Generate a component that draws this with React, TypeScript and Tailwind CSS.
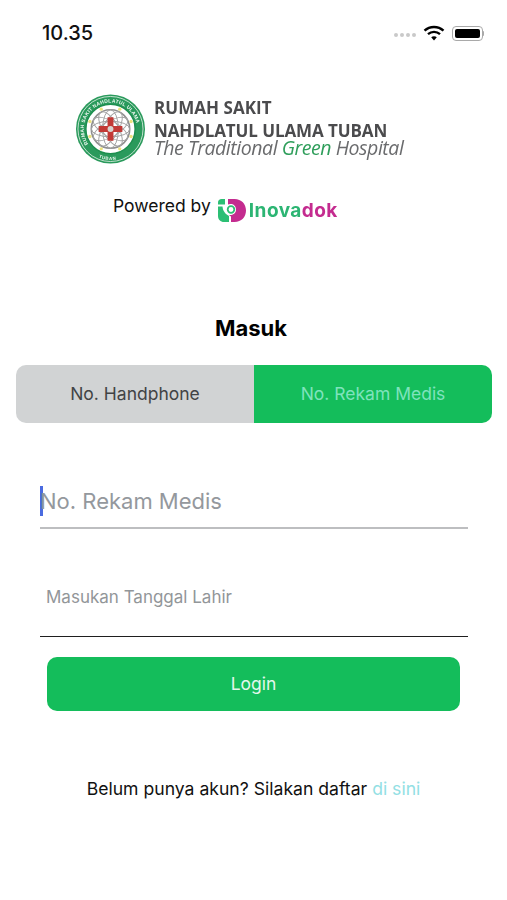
import React from "react";

const sans = "font-['Inter','Noto_Sans',sans-serif]";

function Wifi() {
  return (
    <svg width="22" height="16" viewBox="0 0 22 16" fill="none">
      <path d="M1.500 5.600C6.800.7 15.200.7 20.500 5.600" stroke="#000" strokeWidth="2.400" />
      <path d="M5 9.100c3.400-3 8.600-3 12 0" stroke="#000" strokeWidth="2.400" />
      <path d="M8.200 12.200c1.600-1.300 4-1.300 5.600 0L11 15.400z" fill="#000" />
    </svg>
  );
}

function Battery() {
  return (
    <div className="flex items-center">
      <div className="w-[31px] h-[15px] rounded-[4px] border border-[#a9a9a9] p-[2px]">
        <div className="w-full h-full rounded-[2px] bg-black" />
      </div>
      <div className="w-[1.5px] h-[5px] bg-[#a9a9a9] rounded-r-sm" />
    </div>
  );
}

function StatusBar() {
  return (
    <div className="flex items-center justify-between h-[24px] mt-[21px] pl-[42px] pr-[23px]">
      <span className={`${sans} text-[20px] font-medium text-[#111]`}>10.35</span>
      <div className="flex items-center">
        <div className="flex gap-[2px] mr-[7px] mt-[4px]">
          <div className="w-[4px] h-[4px] rounded-full bg-[#c9c9c9]" />
          <div className="w-[4px] h-[4px] rounded-full bg-[#c9c9c9]" />
          <div className="w-[4px] h-[4px] rounded-full bg-[#c9c9c9]" />
          <div className="w-[4px] h-[4px] rounded-full bg-[#c9c9c9]" />
        </div>
        <div className="mr-[7px]">
          <Wifi />
        </div>
        <Battery />
      </div>
    </div>
  );
}

function HospitalSeal() {
  const web = [0, 30, 60, 90, 120, 150];
  const dots = [20, 65, 115, 160, 200, 245, 295, 340];
  return (
    <svg width="71" height="72" viewBox="0 0 72 72" className="blur-[0.6px]">
      <circle cx="36" cy="36" r="35" fill="#2a9a5c" />
      <circle cx="36" cy="36" r="33" fill="none" stroke="#e9f4ec" strokeWidth="0.800" />
      <circle cx="36" cy="36" r="25" fill="#fff" stroke="#1d8f4f" strokeWidth="1.500" />
      <circle cx="36" cy="36" r="19.500" fill="none" stroke="#8f8f8f" strokeWidth="1.600" />
      {web.map((a) => (
        <ellipse
          key={a}
          cx="36"
          cy="36"
          rx="19.500"
          ry="8"
          fill="none"
          stroke="#a3a3a3"
          strokeWidth="1"
          transform={`rotate(${a} 36 36)`}
        />
      ))}
      {dots.map((a) => (
        <circle
          key={a}
          cx={36 + 22.2 * Math.cos((a * Math.PI) / 180)}
          cy={36 + 22.2 * Math.sin((a * Math.PI) / 180)}
          r="1.700"
          fill="#ece27c"
        />
      ))}
      <path d="M33 24h6v9h9v6h-9v9h-6v-9h-9v-6h9z" fill="#c23a36" />
      <circle cx="36" cy="36" r="3" fill="#d9d2cd" />
      <defs>
        <path id="seal-top" d="M13.500 51A27 27 0 1 1 58.500 51" />
        <path id="seal-bottom" d="M24 65A31.500 31.500 0 0 0 48 65" />
      </defs>
      <text fontSize="5" fontWeight="700" fill="#eef8f1" fontFamily="Liberation Sans, sans-serif" letterSpacing="0.300">
        <textPath href="#seal-top">RUMAH SAKIT NAHDLATUL ULAMA</textPath>
      </text>
      <text fontSize="4.500" fontWeight="700" fill="#eef8f1" fontFamily="Liberation Sans, sans-serif" letterSpacing="0.500">
        <textPath href="#seal-bottom">TUBAN</textPath>
      </text>
    </svg>
  );
}

function InovadokMark() {
  return (
    <svg width="30" height="25" viewBox="0 0 30 25" className="blur-[0.3px]">
      <path d="M1 4.500C1 2.500 2.500 1 4.500 1H8v5.500H1z" fill="#2cbf74" />
      <path d="M1 8.500h4.500c.4 5 3.500 8 6.500 9.500v6H7c-3.500 0-6-2.500-6-6z" fill="#2cbf74" />
      <path d="M11 1h6.500C24.500 1 29 6 29 12.500S24.500 24 17.500 24H14v-5.500c-1-.5-1.500-1-2-1.500 3 .5 7-1 7-5.500 0-3.500-2.500-5.500-5.500-5.500-1 0-2 .2-2.500.6z" fill="#c42b8f" />
      <circle cx="14" cy="11.500" r="3.300" fill="none" stroke="#2cbf74" strokeWidth="1.800" />
    </svg>
  );
}

function LogoBlock() {
  return (
    <div className="flex flex-col">
      <div className="flex items-center pl-[75px] mt-[48px]">
        <HospitalSeal />
        <div className="ml-[8px] mb-[7px] flex flex-col font-['Open_Sans',sans-serif] blur-[0.3px]">
          <span className="text-[17px] leading-[22px] font-bold text-[#4b4b4d] tracking-[0.05px]">RUMAH SAKIT</span>
          <span className="text-[17px] leading-[22px] mt-[1px] font-bold text-[#4b4b4d] tracking-[-0.1px]">
            NAHDLATUL ULAMA TUBAN
          </span>
          <span className="text-[19.5px] leading-[12px] italic text-[#6a6b6d] tracking-[-0.45px]">
            The Traditional <span className="text-[#2f9e5b]">Green</span> Hospital
          </span>
        </div>
      </div>
      <div className="flex items-center pl-[113px] mt-[32px]">
        <span className={`${sans} text-[17.5px] leading-[24px] text-[#111] -mt-[10px]`}>Powered by</span>
        <div className="ml-[6px]">
          <InovadokMark />
        </div>
        <span className={`${sans} ml-[2px] text-[19px] leading-[27px] font-bold tracking-[0.45px] text-[#2cb573] blur-[0.2px]`}>
          Inova<span className="text-[#c42b8f]">dok</span>
        </span>
      </div>
    </div>
  );
}

export default function App() {
  return (
    <div className={`${sans} w-[507px] h-[900px] bg-white overflow-hidden flex flex-col`}>
      <StatusBar />
      <LogoBlock />

      <h1 className="mt-[90px] pr-[5px] text-center text-[22px] leading-[28px] font-bold text-black">Masuk</h1>

      <div className="flex mt-[23px] ml-[16px] mr-[15px] h-[58px] rounded-[10px] overflow-hidden text-[17.5px]">
        <div className="w-[238px] flex items-center justify-center bg-[#d1d3d4] text-[#414345]">No. Handphone</div>
        <div className="flex-1 flex items-center justify-center bg-[#14bd5b] text-[#7fe3bd]">No. Rekam Medis</div>
      </div>

      <div className="mt-[64px] ml-[40px] w-[428px] h-[42px] border-b-2 border-[#bdbec0] flex items-start">
        <div className="w-[3px] h-[30px] bg-[#4a6be0] -mt-[1px]" />
        <span className="-mt-[1px] -ml-[3px] text-[22px] leading-[30px] text-[#94989d]">No. Rekam Medis</span>
      </div>

      <div className="mt-[54px] ml-[40px] w-[428px] h-[54px] border-b-[1.5px] border-[#1f1f1f]">
        <span className="block pl-[6px] pt-[2px] text-[17px] leading-[24px] text-[#929699]">Masukan Tanggal Lahir</span>
      </div>

      <button className="mt-[20px] ml-[47px] w-[413px] h-[54px] pt-[1px] rounded-[10px] bg-[#14bd5b] text-[17.5px] text-[#e3f7ec]">
        Login
      </button>

      <p className="mt-[66px] text-center text-[17.6px] leading-[24px] text-[#111]">
        Belum punya akun? Silakan daftar <span className="text-[#93e0e4]">di sini</span>
      </p>
    </div>
  );
}
